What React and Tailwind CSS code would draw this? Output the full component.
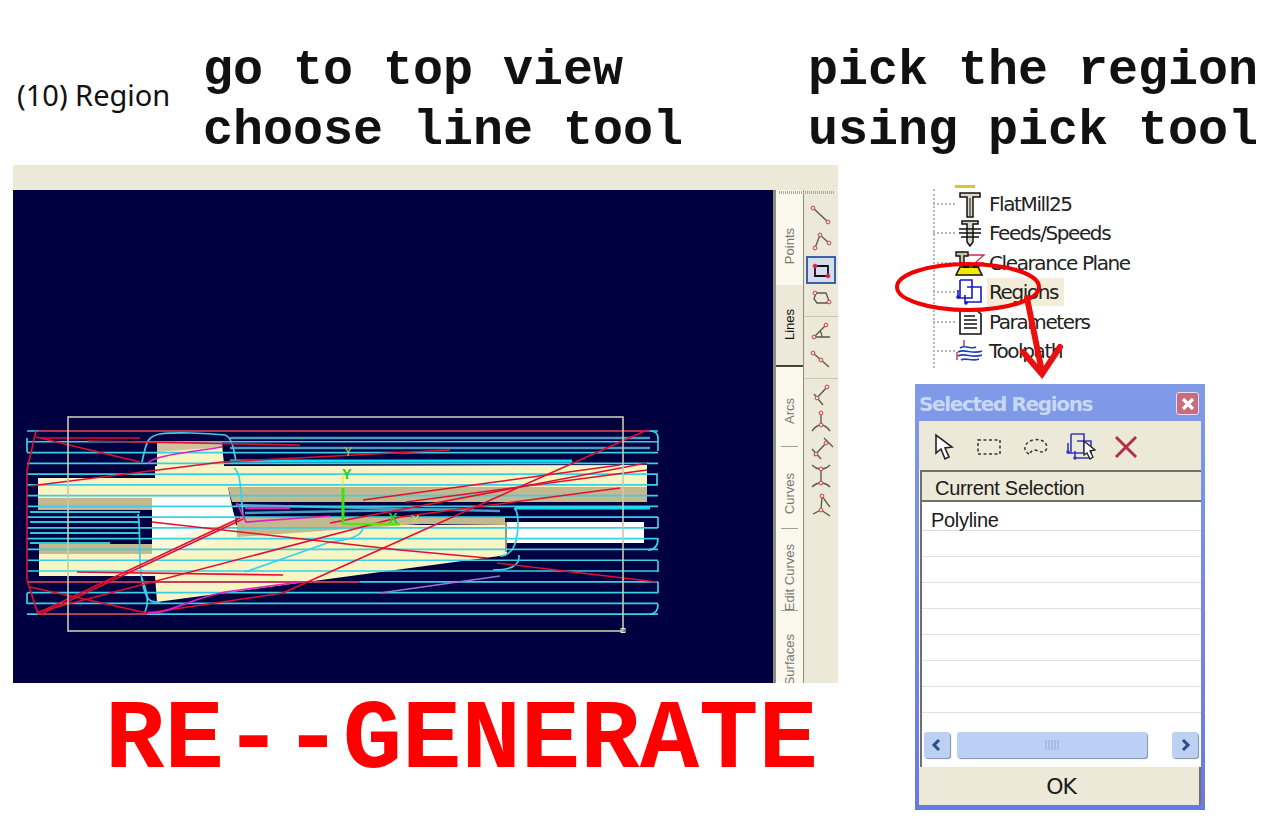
const scanLines = Array.from({ length: 18 }, (_, i) => 431 + i * 10.77);

const redLines = [
    [38, 431, 650, 431],
    [36, 437, 140, 462],
    [36, 431, 27, 470],
    [27, 470, 27, 580],
    [27, 580, 38, 614],
    [38, 613, 240, 518],
    [41, 614, 243, 519],
    [38, 612, 400, 517],
    [400, 517, 620, 488],
    [330, 523, 647, 463],
    [363, 500, 620, 465],
    [406, 502, 647, 470],
    [283, 593, 647, 430],
    [152, 522, 400, 550],
    [400, 550, 487, 558],
    [497, 563, 657, 582],
    [77, 572, 283, 575],
    [27, 582, 360, 582],
    [30, 587, 147, 613],
    [38, 614, 147, 614],
    [147, 613, 283, 593],
    [30, 486, 222, 462],
    [222, 462, 450, 450],
    [40, 438, 140, 438],
    [88, 441, 300, 445],
];

const Cad = () => {
    return (
        <svg viewBox="13 190 760 493" className="block w-[760px] h-[493px]">
            <rect x="13" y="190" width="760" height="493" fill="#000040" />

            {/* model */}
            <polygon points="157,442 222,442 224,466 157,466" fill="#cdc49c" />
            <polygon points="157,452 222,447 224,466 157,466" fill="#f8f4c4" />
            <polygon points="38,478 155,478 155,466 224,466 647,465 647,487 228,487 236,525 152,555 152,498 38,498" fill="#f8f4c4" />
            <polygon points="152,498 228,498 236,520 152,545" fill="#ffffff" />
            <polygon points="228,487 647,487 647,502 232,502" fill="#c4b88e" />
            <polygon points="38,498 152,498 152,510 38,510" fill="#c4b88e" />
            <polygon points="39,544 152,544 152,554 39,554" fill="#c4b88e" />
            <polygon points="39,554 152,554 236,525 420,525 507,525 507,555 157,602 155,576 39,576" fill="#f8f4c4" />
            <polygon points="152,540 236,525 240,536 152,560" fill="#fbf8d8" />
            <polygon points="237,517 505,517 505,525 420,524 237,537" fill="#c4b88e" />
            <rect x="506" y="522" width="138" height="21" fill="#ffffff" />
            <rect x="505" y="522" width="2" height="30" fill="#9c9478" />

            {/* dense strips */}
            <g stroke="#4a9cc0" strokeWidth="2.5" fill="none">
                <line x1="230" y1="438" x2="650" y2="438" />
                <line x1="230" y1="448" x2="650" y2="448" />
                <line x1="236" y1="505" x2="500" y2="511" />
                <line x1="245" y1="513" x2="470" y2="509" />
            </g>
            <g stroke="#30c8e0" strokeWidth="2" fill="none">
                <line x1="30" y1="512" x2="140" y2="512" />
                <line x1="30" y1="522" x2="140" y2="522" />
                <line x1="30" y1="533" x2="140" y2="533" />
                <line x1="30" y1="543" x2="110" y2="543" />
            </g>
            <line x1="230" y1="461" x2="572" y2="461" stroke="#00e4f4" strokeWidth="3" />
            <line x1="515" y1="508" x2="650" y2="508" stroke="#00e4f4" strokeWidth="3" />

            {/* cutter passes */}
            <g stroke="#38d0e4" strokeWidth="1.7" fill="none">
                {scanLines.map((y) => (
                    <line key={y} x1="27" y1={y} x2="658" y2={y} />
                ))}
                <path d="M27 438V452M27 593V604M658 438C658 434 656 431 650 431M658 438V451M657 485V474M658 517V528M658 538C658 546 654 550 648 550M658 561V572M658 582V593M658 604C658 610 656 614 650 614" />
                <path d="M142 462C146 445 146 436 160 434C175 432 205 433 225 435C232 437 234 450 236 462" />
                <path d="M234 468C240 472 240 480 243 517" />
                <path d="M138 514C141 530 138 560 142 580C146 604 152 602 160 602" />
                <path d="M145 612C150 600 146 590 142 578" />
                <path d="M514 508C520 512 519 540 512 550C508 554 505 556 500 556" />
                <path d="M519 555C520 566 510 570 493 570" />
                <path d="M363 527C362 538 345 540 330 542L245 572" />
            </g>

            {/* toolpath links */}
            <g stroke="#e01030" strokeWidth="1.6" fill="none">
                {redLines.map(([x1, y1, x2, y2]) => (
                    <line key={`${x1}-${y1}-${x2}`} x1={x1} y1={y1} x2={x2} y2={y2} />
                ))}
            </g>
            <g stroke="#e020c0" strokeWidth="1.7" fill="none">
                <path d="M148 463C152 456 190 452 222 447" />
                <path d="M148 612C165 616 185 600 225 592L300 582" />
                <path d="M380 593L500 576" stroke="#a070e0" />
                <path d="M237 503L246 522L330 516" />
                <path d="M245 508H290" strokeWidth="2.5" />
            </g>

            {/* stock box */}
            <rect x="68" y="417" width="555" height="214" fill="none" stroke="#c8c8b4" strokeWidth="1.6" />
            <rect x="621" y="628.5" width="4" height="4" fill="none" stroke="#e8e8e0" />

            {/* axes */}
            <line x1="343" y1="470" x2="343" y2="490" stroke="#e8e020" strokeWidth="1" />
            <line x1="343" y1="488" x2="343" y2="524" stroke="#40e010" strokeWidth="3" />
            <line x1="343" y1="524" x2="400" y2="524" stroke="#60e010" strokeWidth="2.5" />
            <line x1="400" y1="524" x2="402" y2="524" stroke="#e8e020" strokeWidth="1" />
            <text x="348" y="456" textAnchor="middle" fontSize="13" fill="#a8c040" fontFamily="Liberation Sans, sans-serif">Y</text>
            <text x="347" y="479" textAnchor="middle" fontSize="14" fontWeight="700" fill="#20d020" fontFamily="Liberation Sans, sans-serif">Y</text>
            <text x="393" y="523" textAnchor="middle" fontSize="14" fontWeight="700" fill="#20d020" fontFamily="Liberation Sans, sans-serif">X</text>
            <text x="415" y="524" textAnchor="middle" fontSize="13" fill="#d8d060" fontFamily="Liberation Sans, sans-serif">X</text>
        </svg>
    );
};

const Node = ({ x, y, hot }) => (
    <circle cx={x} cy={y} r="1.9" fill={hot ? "#e8102c" : "#f4dde0"} stroke="#c8405c" strokeWidth="1" />
);

const lineTools = [
    { d: "M7 7L22 21", n: [[7, 7], [22, 21]] },
    { d: "M9 20L14 7L23 15", n: [[9, 20], [14, 7], [23, 15]] },
    { d: "M9 10H22V20H9Z", n: [[9, 10], [22, 20]], selected: true, dark: true },
    { d: "M10 10H20L23 18L21 20H11L8 16Z", n: [[9, 10], [23, 19]] },
];
const angleTools = [
    { d: "M8 20L20 8M8 20H24M14 14C16 16 16 18 16 20", n: [[8, 20], [20, 8]] },
    { d: "M7 8L23 22", n: [[7, 8], [15, 15]] },
];
const arcTools = [
    { d: "M10 20L21 8M8 15L17 26", n: [[11, 19], [21, 8]] },
    { d: "M15 7V19M6 25C9 21 12 19 15 19C18 19 21 21 24 25", n: [[15, 7], [15, 19]] },
    { d: "M8 22L21 8M6 15L15 25M18 4L27 13", n: [[10, 20], [20, 9]] },
    { d: "M15 8V22M6 4C9 7 12 8 15 8C18 8 21 7 24 4M6 26C9 23 12 22 15 22C18 22 21 23 24 26", n: [[15, 8], [15, 22]] },
    { d: "M15 21L16 7M7 25L15 21L24 27M16 7C19 11 21 15 24 18", n: [[15, 21], [16, 7]] },
];

const ToolIcon = ({ d, n, selected, dark }) => {
    return (
        <div
            className={
                selected
                    ? "h-[27.5px] w-[30px] border-2 border-[#3a62a8] bg-[#d8dcec] flex items-center justify-center"
                    : "h-[27.5px] w-[30px] flex items-center justify-center"
            }
        >
            <svg viewBox="0 0 30 28" className="w-[30px] h-[28px] shrink-0">
                <path d={d} fill="none" stroke={dark ? "#111111" : "#555548"} strokeWidth={dark ? 1.8 : 1.3} />
                {n.map(([x, y]) => (
                    <Node key={`${x}-${y}`} x={x} y={y} hot={dark} />
                ))}
            </svg>
        </div>
    );
};

const Tab = ({ label, className, active, rule }) => {
    return (
        <div className={`relative shrink-0 flex justify-center ${className}`}>
            <span
                className={
                    active
                        ? "[writing-mode:vertical-rl] rotate-180 text-[13px] leading-none text-[#111111] font-['Liberation_Sans',sans-serif] whitespace-nowrap"
                        : "[writing-mode:vertical-rl] rotate-180 text-[13px] leading-none text-[#77776c] font-['Liberation_Sans',sans-serif] whitespace-nowrap"
                }
            >
                {label}
            </span>
            {rule && <div className="absolute left-[5px] right-[5px] bottom-[4px] h-px bg-[#a0a094]" />}
        </div>
    );
};

const SidePanel = () => {
    return (
        <div className="relative flex w-[65px] h-[493px] overflow-hidden">
            <div className="w-[3px] bg-[#8c8c80]" />
            <div className="w-[28px] bg-[#fbf9ee] border-r border-[#8c8c80] flex flex-col">
                <Tab label="Points" className="h-[95px] pt-[17px] items-center" />
                <Tab label="Lines" className="h-[82px] items-center bg-[#ece9d8] border-b-2 border-[#444438]" active />
                <Tab label="Arcs" className="h-[84px] pt-[4px] items-center" rule />
                <Tab label="Curves" className="h-[82px] pt-[4px] items-center" rule />
                <Tab label="Edit Curves" className="h-[82px] pt-[8px] items-center" rule />
                <Tab label="Surfaces" className="h-[68px] pt-[19px] items-start" />
            </div>
            <div className="flex-1 bg-[#ece9d8] flex flex-col items-center pt-[11px]">
                {lineTools.map((t) => (
                    <ToolIcon key={t.d} {...t} />
                ))}
                <div className="w-full h-[6px] border-b border-[#c8c6b6] mb-[0.5px]" />
                {angleTools.map((t) => (
                    <ToolIcon key={t.d} {...t} />
                ))}
                <div className="w-full h-[6px] border-b border-[#c8c6b6] mb-[0.5px]" />
                {arcTools.map((t) => (
                    <ToolIcon key={t.d} {...t} />
                ))}
            </div>
            <div className="absolute top-[1px] right-[3px] w-[56px] h-[3px] bg-[repeating-linear-gradient(90deg,#a8a89c_0,#a8a89c_1px,transparent_1px,transparent_2px)]" />
        </div>
    );
};

const MillIcon = () => (
    <svg viewBox="0 0 26 28" className="w-[26px] h-[28px]">
        <path d="M3 3H23V7H16V27H10V7H3Z" fill="#ddd8c8" stroke="#111111" strokeWidth="1.5" />
        <path d="M13 8V26" stroke="#111111" />
    </svg>
);
const FeedsIcon = () => (
    <svg viewBox="0 0 26 28" className="w-[26px] h-[28px]">
        <path d="M5 2H21V5H16V23L13 27L10 23V5H5Z" fill="#ddd8c8" stroke="#111111" strokeWidth="1.5" />
        <path d="M2 10H24M2 14H24M4 18H22" stroke="#111111" strokeWidth="1.6" />
    </svg>
);
const ClearanceIcon = () => (
    <svg viewBox="0 0 30 28" className="w-[30px] h-[28px]">
        <path d="M11 6H29L20 14H28L22 20" fill="none" stroke="#c83040" strokeWidth="1.3" />
        <path d="M1 3H13V7H9V14H5V7H1Z" fill="#ccc6a8" stroke="#111111" strokeWidth="1.4" />
        <path d="M1 26L5 18H23L27 26Z" fill="#f4e800" stroke="#111111" strokeWidth="1.6" />
        <path d="M8 16H14V19H8ZM18 16H24V19H18Z" fill="#111111" />
    </svg>
);
const RegionsIcon = () => (
    <svg viewBox="0 0 28 28" className="w-[28px] h-[28px]">
        <path d="M4 2H16V20H2V12" fill="none" stroke="#1818c8" strokeWidth="1.6" />
        <path d="M4 2V20M11 9H25V24H9V17" fill="none" stroke="#1818c8" strokeWidth="1.6" />
        <circle cx="2" cy="19" r="1.8" fill="#1818c8" />
        <circle cx="10" cy="25" r="1.8" fill="#1818c8" />
    </svg>
);
const ParamsIcon = () => (
    <svg viewBox="0 0 26 28" className="w-[26px] h-[28px]">
        <path d="M3 2H19L24 6V26H3Z" fill="#ffffff" stroke="#111111" strokeWidth="1.6" />
        <path d="M7 8H18M7 12H20M7 16H20M7 20H20" stroke="#111111" strokeWidth="1.5" />
    </svg>
);
const ToolpathIcon = () => (
    <svg viewBox="0 0 28 26" className="w-[28px] h-[26px]">
        <path d="M8 2V8" stroke="#c83040" strokeWidth="1.4" />
        <path d="M4 10C10 6 14 12 20 9M2 14C9 10 16 17 26 13M2 18C9 14 16 21 26 17M5 22C10 19 16 24 23 21" fill="none" stroke="#2040c0" strokeWidth="1.6" />
        <path d="M1 14V22" stroke="#c83040" strokeWidth="1.4" />
    </svg>
);

const treeItems = [
    { label: "FlatMill25", icon: <MillIcon /> },
    { label: "Feeds/Speeds", icon: <FeedsIcon /> },
    { label: "Clearance Plane", icon: <ClearanceIcon /> },
    { label: "Regions", icon: <RegionsIcon />, active: true },
    { label: "Parameters", icon: <ParamsIcon /> },
    { label: "Toolpath", icon: <ToolpathIcon /> },
];

const Tree = () => {
    return (
        <div className="relative h-[195px] -mt-[1px] pl-[21px] flex flex-col">
            <div className="absolute left-[21px] top-0 bottom-[16px] border-l-2 border-dotted border-[#b8b8b8]" />
            <div className="absolute left-[43px] -top-[4px] w-[20px] h-[3px] bg-[#d8c820]" />
            {treeItems.map((item) => (
                <div key={item.label} className="h-[29.5px] flex items-center">
                    <div className="w-[22px] border-t-2 border-dotted border-[#b8b8b8]" />
                    <div className="w-[34px] pr-[4px] flex justify-center shrink-0">{item.icon}</div>
                    <span
                        className={
                            item.active
                                ? "bg-[#f1edd8] px-[2px] -ml-[2px] h-[28px] w-[77px] leading-[28px] text-[20px] text-[#222222] font-['DejaVu_Sans',sans-serif] tracking-[-1.4px]"
                                : "text-[20px] text-[#222222] font-['DejaVu_Sans',sans-serif] tracking-[-1.4px] whitespace-nowrap"
                        }
                    >
                        {item.label}
                    </span>
                </div>
            ))}
        </div>
    );
};

const DialogTools = () => {
    return (
        <div className="h-[49px] bg-[#ece9d8] flex items-center pl-[13px] pt-[2px] gap-[16px]">
            <svg viewBox="0 0 24 30" className="w-[24px] h-[30px]">
                <path d="M4 3L4 21L9 17L13 27L17 25L13 16L20 15Z" fill="#ffffff" stroke="#222222" strokeWidth="1.6" />
            </svg>
            <svg viewBox="0 0 26 20" className="w-[26px] h-[20px] ml-[4px]">
                <rect x="2" y="3" width="22" height="14" fill="none" stroke="#333333" strokeWidth="1.5" strokeDasharray="3 2.5" />
            </svg>
            <svg viewBox="0 0 28 20" className="w-[28px] h-[20px] ml-[3px]">
                <path d="M8 17C2 14 2 6 12 3C22 1 28 7 25 13C22 17 18 14 14 13C11 13 10 15 8 17Z" fill="none" stroke="#333333" strokeWidth="1.5" strokeDasharray="3 2.5" />
            </svg>
            <svg viewBox="0 0 32 32" className="w-[32px] h-[32px]">
                <path d="M6 3H19V22H3V12" fill="none" stroke="#3838c0" strokeWidth="1.6" />
                <path d="M6 3V22M12 10H26V27H10V20" fill="none" stroke="#3838c0" strokeWidth="1.6" />
                <circle cx="3" cy="21" r="1.8" fill="#3838c0" />
                <circle cx="10" cy="27" r="1.8" fill="#3838c0" />
                <path d="M19 10L19 24L22 22L25 28L28 26L25 20L30 19Z" fill="#ffffff" stroke="#222222" strokeWidth="1.3" />
            </svg>
            <svg viewBox="0 0 26 26" className="w-[26px] h-[26px]">
                <path d="M3 3L23 23M23 3L3 23" stroke="#b03048" strokeWidth="3" />
            </svg>
        </div>
    );
};

const ScrollBtn = ({ d }) => (
    <div className="w-[26px] h-[26px] rounded-[3px] bg-[#bcd0f4] shadow-[1px_1px_1px_#8090a8] flex items-center justify-center">
        <svg viewBox="0 0 16 16" className="w-[16px] h-[16px]">
            <path d={d} fill="none" stroke="#2c4c88" strokeWidth="3" />
        </svg>
    </div>
);

const Dialog = () => {
    return (
        <div className="w-[290px] h-[426px] px-[4px] pb-[5px] flex flex-col bg-gradient-to-b from-[#7f9be8] to-[#6a78e4]">
            <div className="h-[37px] flex items-center justify-between pr-[1px] pt-[2px]">
                <span className="text-[20px] font-bold tracking-[-1.35px] text-[#c8d8f4] font-['DejaVu_Sans',sans-serif] whitespace-nowrap">
                    Selected Regions
                </span>
                <div className="w-[23px] h-[23px] mr-[1px] rounded-[3px] border border-[#e8e0f0] bg-[#c86c80] flex items-center justify-center">
                    <svg viewBox="0 0 14 14" className="w-[14px] h-[14px]">
                        <path d="M2 2L12 12M12 2L2 12" stroke="#ffffff" strokeWidth="3.2" />
                    </svg>
                </div>
            </div>
            <div className="flex-1 flex flex-col bg-white">
                <DialogTools />
                <div className="flex-1 flex flex-col border-l-2 border-[#70706c] ml-[1px]">
                    <div className="h-[32px] bg-[#ece9d8] border-t-2 border-b-2 border-[#70706c] pl-[13px] pt-[4px] flex items-center text-[20px] tracking-[-0.3px] text-[#1a1a1a] font-['Liberation_Sans',sans-serif]">
                        Current Selection
                    </div>
                    <div className="h-[29px] pl-[9px] pt-[7px] border-b border-[#dcdcd4] flex items-center text-[20px] tracking-[-0.3px] text-[#1a1a1a] font-['Liberation_Sans',sans-serif]">
                        Polyline
                    </div>
                    {[0, 1, 2, 3, 4, 5, 6].map((i) => (
                        <div key={i} className="h-[26px] border-b border-[#e4e2d8]" />
                    ))}
                    <div className="h-[47px] flex items-center gap-[7px] pl-[2px] pr-[3px] pt-[19px] pb-[2px]">
                        <ScrollBtn d="M10 3L5 8L10 13" />
                        <div className="w-[190px] h-[26px] rounded-[3px] bg-[#bcd0f6] shadow-[1px_1px_1px_#8090a8] flex items-center justify-center">
                            <svg viewBox="0 0 14 10" className="w-[14px] h-[10px]">
                                <path d="M1 0V10M4 0V10M7 0V10M10 0V10M13 0V10" stroke="#90a8d0" />
                            </svg>
                        </div>
                        <div className="flex-1" />
                        <ScrollBtn d="M6 3L11 8L6 13" />
                    </div>
                </div>
                <div className="h-[38px] -mt-[1px] pl-[4px] bg-[#ece9d8] border-r-2 border-[#70706c] flex items-center justify-center text-[22px] text-[#1a1a1a] font-['DejaVu_Sans',sans-serif] tracking-[-1px]">
                    OK
                </div>
            </div>
        </div>
    );
};

const App = () => {
    return (
        <div className="relative w-[1268px] h-[839px] bg-white overflow-hidden">
            <header className="flex h-[165px] pt-[41px]">
                <div className="w-[203px] pl-[17px] pt-[34px] text-[29px] leading-[40px] text-[#111111] font-['Noto_Sans',sans-serif] whitespace-nowrap">
                    (10) Region
                </div>
                <div className="w-[605px] text-[50px] leading-[60px] font-bold text-[#111111] font-['Liberation_Mono',monospace] whitespace-pre">
                    go to top view{"\n"}choose line tool
                </div>
                <div className="text-[50px] leading-[60px] font-bold text-[#111111] font-['Liberation_Mono',monospace] whitespace-pre">
                    pick the region{"\n"}using pick tool
                </div>
            </header>

            <div className="flex">
                <div className="w-[912px] pl-[13px]">
                    <div className="w-[825px]">
                        <div className="h-[25px] bg-[#ece9d8]" />
                        <div className="flex">
                            <Cad />
                            <SidePanel />
                        </div>
                    </div>
                    <div className="pl-[92px] pt-[10px] text-[99px] leading-[96px] font-bold text-[#ff0000] font-['Liberation_Mono',monospace] whitespace-nowrap">
                        RE--GENERATE
                    </div>
                </div>
                <div className="pt-[25px] w-[300px]">
                    <Tree />
                    <div className="pl-[3px]">
                        <Dialog />
                    </div>
                </div>
            </div>

            {/* red callout over the tree */}
            <svg viewBox="0 0 1268 839" className="absolute inset-0 w-[1268px] h-[839px] pointer-events-none">
                <ellipse cx="968" cy="287" rx="71" ry="23" fill="none" stroke="#f00000" strokeWidth="4" />
                <path d="M1027 298L1042 372M1023 352L1042 374L1060 347" fill="none" stroke="#e81010" strokeWidth="6" strokeLinecap="round" />
            </svg>
        </div>
    );
};

export default App;
